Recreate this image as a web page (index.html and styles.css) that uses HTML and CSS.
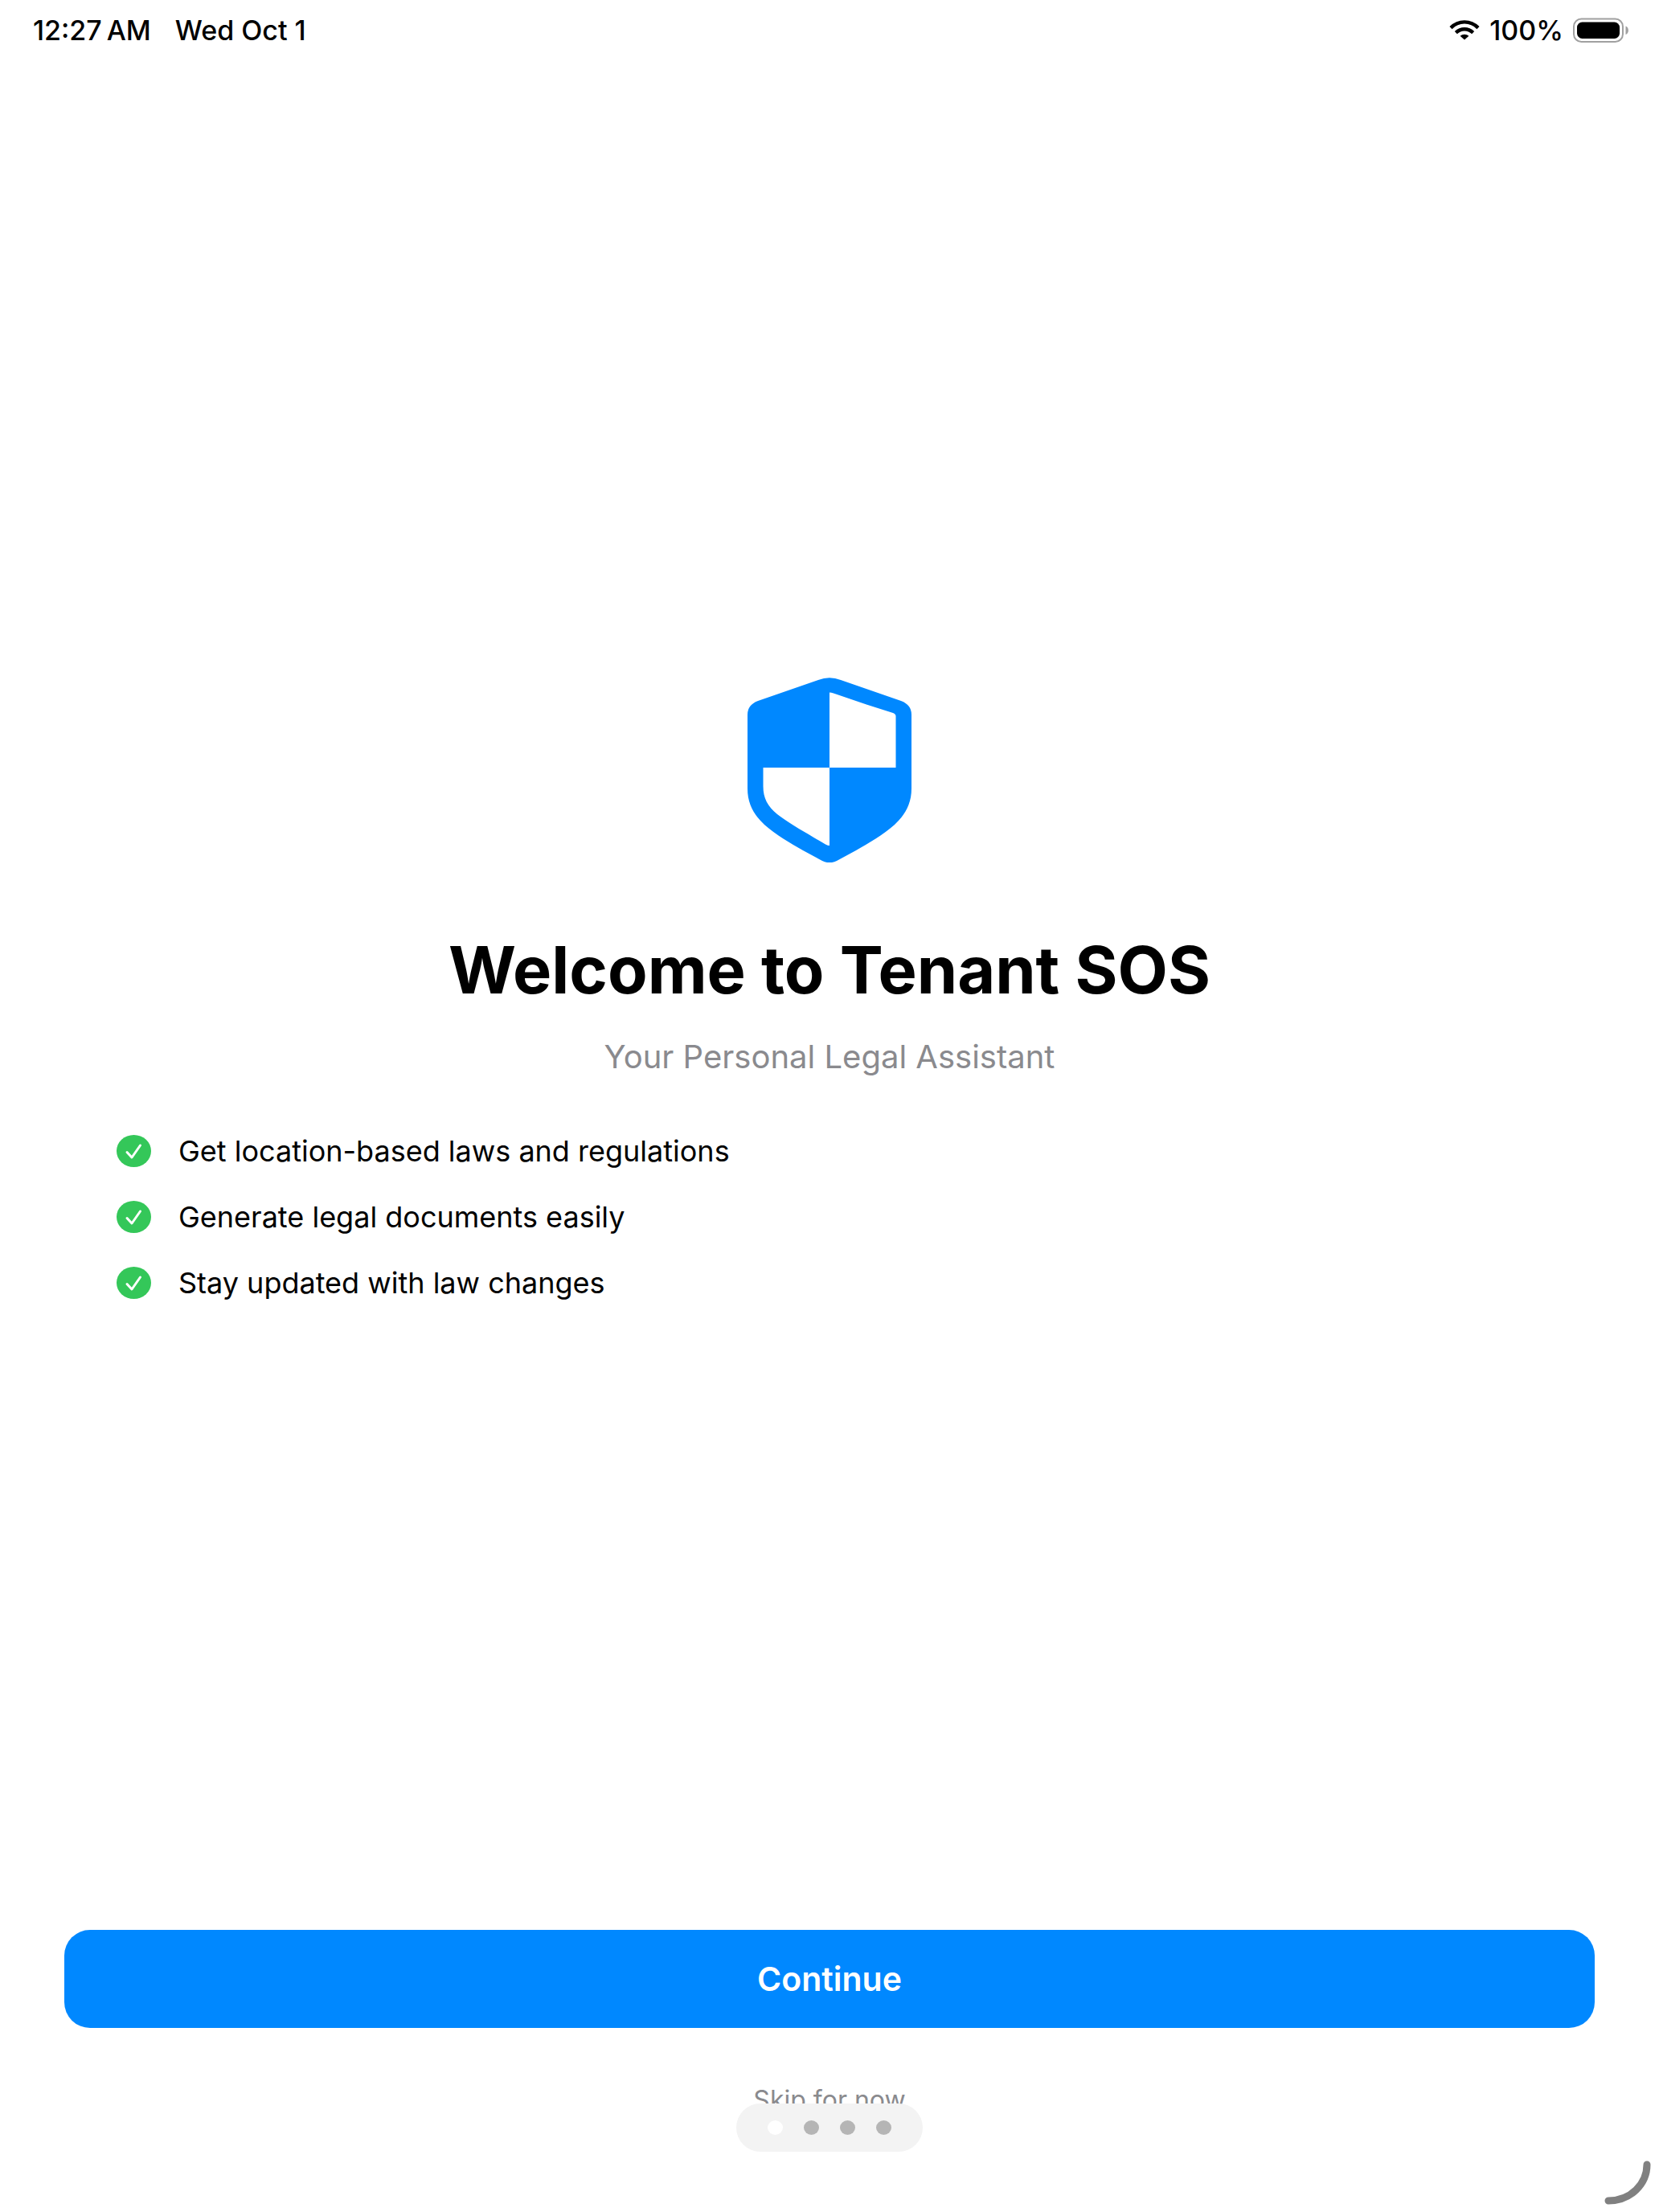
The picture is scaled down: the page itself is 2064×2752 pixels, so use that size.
FILE: index.html
```html
<!DOCTYPE html>
<html lang="en">
<head>
<meta charset="utf-8">
<meta name="viewport" content="width=device-width, initial-scale=1">
<title>Tenant SOS</title>
<link rel="stylesheet" href="styles.css">
</head>
<body>
<header class="status">
  <div class="status-group status-left">
    <span>12:27&#8201;AM</span>
    <span>Wed Oct 1</span>
  </div>
  <div class="status-group">
    <svg class="wifi" viewBox="0 0 38 26" aria-hidden="true">
      <g fill="none" stroke="#000" stroke-width="4.4">
        <path d="M2 9.6C11.500 0 26.500 0 36 9.600"/>
        <path d="M8.300 15.700C14.500 9.800 23.500 9.800 29.700 15.700"/>
      </g>
      <path d="M19 24.500L13.600 19.700C16.600 17 21.400 17 24.400 19.700Z"/>
    </svg>
    <span>100%</span>
    <svg class="battery" viewBox="0 0 70 32" aria-hidden="true">
      <rect x="1" y="1.500" width="61" height="28.500" rx="9.500" fill="none" stroke="#a0a0a0" stroke-width="2"/>
      <rect x="5" y="5.500" width="53" height="20.500" rx="6.500"/>
      <path d="M65.500 10.500C70 12 70 19.500 65.500 21Z" fill="#a0a0a0"/>
    </svg>
  </div>
</header>

<main class="welcome">
  <svg class="shield" viewBox="0 0 204 230" aria-hidden="true">
    <path fill="#0088ff" fill-rule="evenodd" d="M88 3Q102 -2.500 116 3L191 29Q204 34 204 46V138C204 157 196 171 183 183C168 196 151 206 135 215L111 228Q102 232.500 93 228L69 215C53 206 36 196 21 183C8 171 0 157 0 138V46Q0 34 13 29ZM102 18.500V112H184.500V48Q184.500 45.500 181 44L148 33.500L107 19.500Q104 18.500 102 18.500ZM102 112H19.500V135C19.500 150 25 160 37 170C54 183 78 196 97 207.500Q100 209 102 209Z"/>
  </svg>
  <h1 class="title">Welcome to Tenant SOS</h1>
  <p class="subtitle">Your Personal Legal Assistant</p>
  <ul class="features">
    <li class="feature">
      <svg class="check" viewBox="0 0 43 40" aria-hidden="true"><ellipse cx="21.500" cy="20" rx="21.500" ry="20" fill="#34c759"/><path d="M13 21.500L19 28L29.500 13" fill="none" stroke="#fff" stroke-width="3" stroke-linecap="round" stroke-linejoin="round"/></svg>
      <span>Get location-based laws and regulations</span>
    </li>
    <li class="feature">
      <svg class="check" viewBox="0 0 43 40" aria-hidden="true"><ellipse cx="21.500" cy="20" rx="21.500" ry="20" fill="#34c759"/><path d="M13 21.500L19 28L29.500 13" fill="none" stroke="#fff" stroke-width="3" stroke-linecap="round" stroke-linejoin="round"/></svg>
      <span>Generate legal documents easily</span>
    </li>
    <li class="feature">
      <svg class="check" viewBox="0 0 43 40" aria-hidden="true"><ellipse cx="21.500" cy="20" rx="21.500" ry="20" fill="#34c759"/><path d="M13 21.500L19 28L29.500 13" fill="none" stroke="#fff" stroke-width="3" stroke-linecap="round" stroke-linejoin="round"/></svg>
      <span>Stay updated with law changes</span>
    </li>
  </ul>
</main>

<footer class="actions">
  <button class="continue" type="button">Continue</button>
  <button class="skip" type="button">Skip for now</button>
  <nav class="pager" aria-label="Pages">
    <span class="dot dot-current"></span>
    <span class="dot"></span>
    <span class="dot"></span>
    <span class="dot"></span>
  </nav>
</footer>

<svg class="corner" viewBox="0 0 60 56" aria-hidden="true">
  <path d="M53 5C53 29 33 50 5 50" fill="none" stroke="#808080" stroke-width="9" stroke-linecap="round"/>
</svg>
</body>
</html>
```

FILE: styles.css
```css
* {
  box-sizing: border-box;
}

body {
  margin: 0;
  min-height: 100vh;
  display: flex;
  flex-direction: column;
  background: #fff;
  color: #000;
  font-family: Inter, "Liberation Sans", sans-serif;
}

.status {
  display: flex;
  justify-content: space-between;
  align-items: center;
  padding: 16px 37px 0 41px;
  font-size: 34px;
  line-height: 43px;
  font-weight: 500;
}

.status-group {
  display: flex;
  align-items: center;
  gap: 12px;
}

.status-left {
  gap: 30px;
}

.wifi {
  width: 38px;
  height: 26px;
}

.battery {
  width: 70px;
  height: 32px;
}

.welcome {
  flex: 1;
  display: flex;
  flex-direction: column;
  align-items: center;
  justify-content: center;
  padding: 0 145px;
}

.shield {
  width: 204px;
  height: 230px;
}

.title {
  margin: 86px 0 0;
  font-size: 81px;
  line-height: 96px;
  font-weight: 700;
}

.subtitle {
  margin: 36px 0 0;
  font-size: 40px;
  line-height: 48px;
  color: #8a8a8e;
}

.features {
  align-self: stretch;
  margin: 71px 0 0;
  padding: 0;
  list-style: none;
  display: flex;
  flex-direction: column;
  gap: 38px;
}

.feature {
  display: flex;
  align-items: center;
  gap: 34px;
  font-size: 36px;
  line-height: 44px;
}

.check {
  width: 43px;
  height: 40px;
}

.actions {
  display: flex;
  flex-direction: column;
  align-items: center;
  padding: 0 80px 75px;
}

.continue,
.skip {
  border: 0;
  padding: 0;
  font-family: inherit;
}

.continue {
  width: 100%;
  height: 122px;
  border-radius: 32px;
  background: #0088ff;
  color: #fff;
  font-size: 41px;
  line-height: 48px;
  font-weight: 600;
}

.skip {
  margin-top: 70px;
  background: none;
  color: #8a8a8e;
  font-size: 32px;
  line-height: 40px;
}

/* The page control overlaps the lower half of the skip label. */
.pager {
  position: relative;
  margin-top: -16px;
  display: flex;
  align-items: center;
  gap: 26px;
  height: 60px;
  padding: 0 39px;
  border-radius: 30px;
  background: #f3f3f3;
}

.dot {
  width: 19px;
  height: 18px;
  border-radius: 50%;
  background: #b5b5b5;
}

.dot-current {
  background: #fff;
}

.corner {
  position: absolute;
  right: 8px;
  bottom: 8px;
  width: 60px;
  height: 56px;
}
```
